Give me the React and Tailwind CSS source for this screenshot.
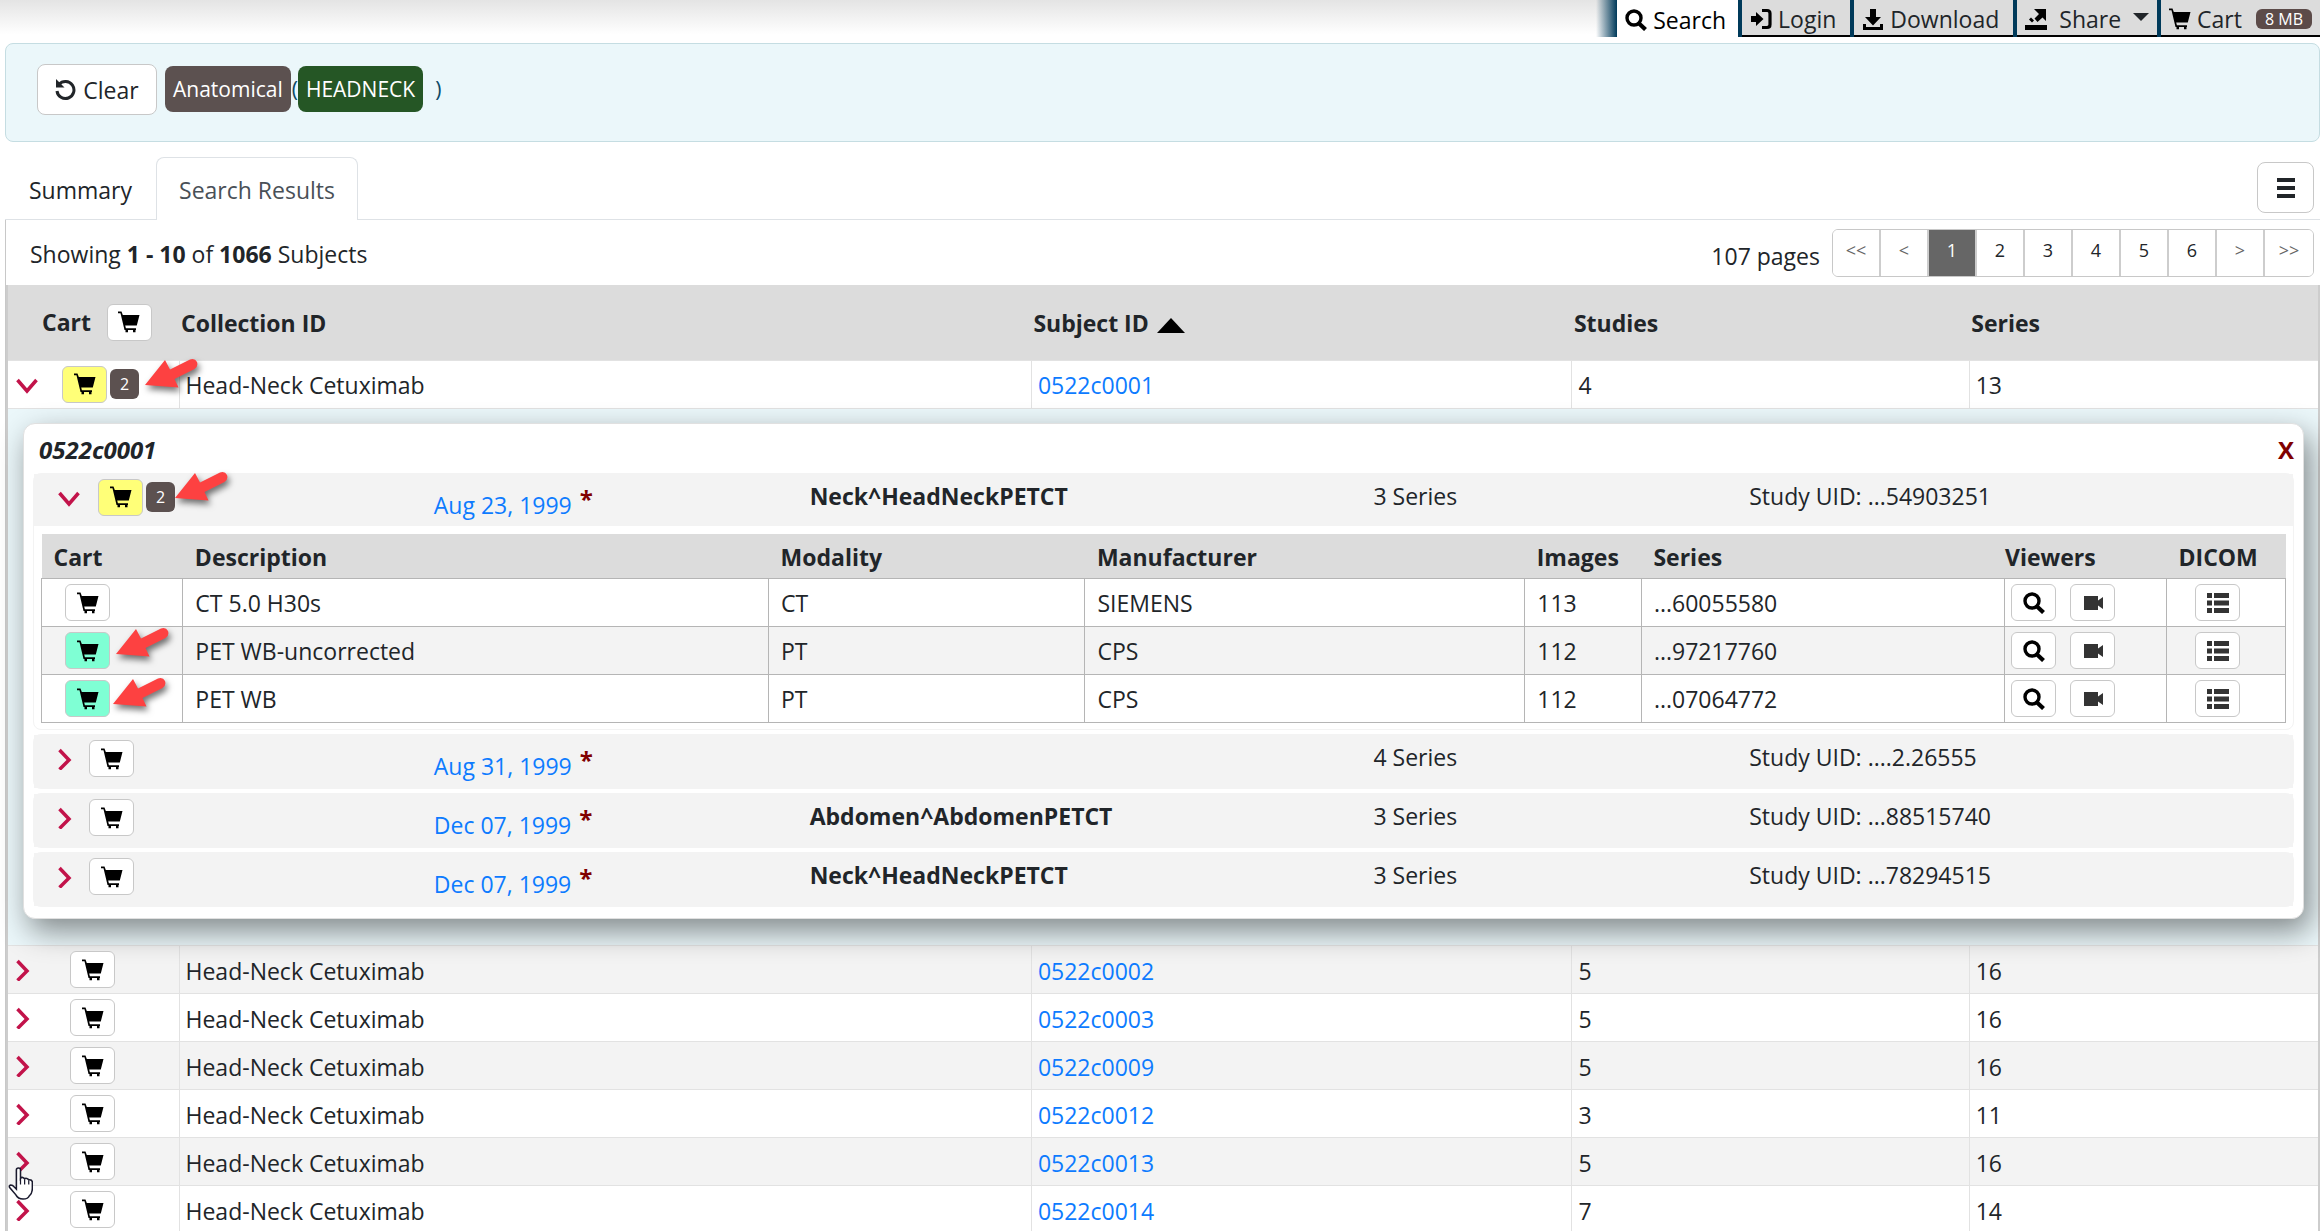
import React, { useState } from "react";
import clsx from "clsx";

const tools = [
  { label: "Search", icon: "search" },
  { label: "Login", icon: "login" },
  { label: "Download", icon: "download" },
  { label: "Share", icon: "share", caret: true },
  { label: "Cart", icon: "cart", badge: "8 MB" },
];

const pages = ["<<", "<", "1", "2", "3", "4", "5", "6", ">", ">>"];

const subjects = [
  { id: "0522c0001", studies: 4, series: 13, inCart: 2 },
  { id: "0522c0002", studies: 5, series: 16 },
  { id: "0522c0003", studies: 5, series: 16 },
  { id: "0522c0009", studies: 5, series: 16 },
  { id: "0522c0012", studies: 3, series: 11 },
  { id: "0522c0013", studies: 5, series: 16 },
  { id: "0522c0014", studies: 7, series: 14 },
];

const seriesRows = [
  { description: "CT 5.0 H30s", modality: "CT", manufacturer: "SIEMENS", images: 113, uid: "...60055580" },
  { description: "PET WB-uncorrected", modality: "PT", manufacturer: "CPS", images: 112, uid: "...97217760", inCart: true, arrow: "top-0 left-[73px]" },
  { description: "PET WB", modality: "PT", manufacturer: "CPS", images: 112, uid: "...07064772", inCart: true, arrow: "top-0.5 left-[70px]" },
];

const studies = [
  { date: "Aug 23, 1999", description: "Neck^HeadNeckPETCT", count: 3, uid: "...54903251", inCart: 2, rows: seriesRows },
  { date: "Aug 31, 1999", description: "", count: 4, uid: "....2.26555" },
  { date: "Dec 07, 1999", description: "Abdomen^AbdomenPETCT", count: 3, uid: "...88515740" },
  { date: "Dec 07, 1999", description: "Neck^HeadNeckPETCT", count: 3, uid: "...78294515" },
];

const icons = {
  search: (
    <g fill="none" stroke="currentColor">
      <circle cx="9" cy="9" r="7" strokeWidth="3.4" />
      <path d="M13.5 14l7 6.500" strokeWidth="4.2" />
    </g>
  ),
  login: (
    <g>
      <path d="M1 8h5V4l7.500 7L6 18v-4H1z" fill="currentColor" />
      <path d="M12 2.500h5q3 0 3 3v11q0 3-3 3h-5" fill="none" stroke="currentColor" strokeWidth="3.200" />
    </g>
  ),
  download: (
    <g fill="currentColor">
      <path d="M8 1h6v8h5l-8 8.500L3 9h5z" />
      <path d="M1 16h3v3h14v-3h3v6H1z" />
    </g>
  ),
  share: (
    <g fill="currentColor">
      <path d="M9 1h12v12l-3.500-3.500-5 4.500-3-3.500 4.500-4.500z" />
      <path d="M6 9.500l3 3-2 2-3-3z" />
      <path d="M0 17h22v5H0z" />
    </g>
  ),
  cart: (
    <g fill="currentColor">
      <path d="M0 .5h3.500L4.800 4h16.700l-2.700 10.500H7.200l.7 2.800H18V19H6.500L2.500 2.300H0z" />
      <path d="M7.500 19h2.500v2.200H7.500zM15 19h2.500v2.200H15z" />
    </g>
  ),
  video: <path d="M2 4h14v4.500L21 5v12l-5-3.500V18H2z" fill="#333" />,
  list: <path d="M0 1h5v5H0zM7 1h15v5H7zM0 8.500h5v5H0zM7 8.500h15v5H7zM0 16h5v5H0zM7 16h15v5H7z" fill="#333" />,
  undo: (
    <g>
      <path d="M4 5.500a8.500 8.500 0 1 1-2 6.500" fill="none" stroke="currentColor" strokeWidth="3" />
      <path d="M1 0v8.500h8.500z" fill="currentColor" />
    </g>
  ),
  menu: <path d="M2 1h18v4H2zM2 9h18v4H2zM2 17h18v4H2z" fill="currentColor" />,
};

const Icon = ({ name, className }) => (
  <svg viewBox="0 0 22 22" className={clsx("shrink-0", className || "size-[22px]")} aria-hidden="true">
    {icons[name]}
  </svg>
);

const Chevron = ({ open, onClick, label }) => (
  <button type="button" onClick={onClick} aria-label={label} className="flex w-[22px] shrink-0 text-[#c2134a]">
    <svg viewBox="0 0 22 22" className="size-[22px]" aria-hidden="true">
      <path
        d={open ? "M1.500 7L11 18l9.500-11" : "M1.500 2L11 12l-9.500 9.500"}
        fill="none"
        stroke="currentColor"
        strokeWidth="3.500"
      />
    </svg>
  </button>
);

const IconButton = ({ name, label, color = "bg-white" }) => (
  <button
    type="button"
    aria-label={label}
    className={clsx("flex h-[37px] w-[45px] shrink-0 items-center justify-center rounded-md border border-[#c8c8c8] text-black", color)}
  >
    <Icon name={name} />
  </button>
);

const CountBadge = ({ children }) => (
  <span className="flex h-[30px] w-[29px] items-center justify-center rounded-md bg-[#5c5150] text-base text-white">
    {children}
  </span>
);

// Red callout arrow, its tip sits on the left edge
const Arrow = ({ className }) => (
  <svg viewBox="0 0 60 40" className={clsx("absolute z-10 h-[40px] w-[60px] drop-shadow-[2px_4px_3px_rgba(0,0,0,0.55)]", className)} aria-hidden="true">
    <path d="M1 27L21 2l5 9.500L46 1.500q5-1.500 7 2.500 1.500 4.500-2.500 7L30.500 21l4 8.500z" fill="#fd4141" />
  </svg>
);

const SeriesTable = ({ rows }) => {
  const head = "px-3 pt-0.5 text-left font-bold";
  const cell = "border border-[#b5b5b5] px-3";
  return (
    <div className="px-[7px] pt-2 pb-1.5">
      <table className="w-full table-fixed border-collapse">
        <thead>
          <tr className="h-[45px] bg-[#dcdcdc]">
            <th className={clsx(head, "w-[6.3%]")}>Cart</th>
            <th className={clsx(head, "w-[26.1%]")}>Description</th>
            <th className={clsx(head, "w-[14.1%]")}>Modality</th>
            <th className={clsx(head, "w-[19.6%]")}>Manufacturer</th>
            <th className={clsx(head, "w-[5.2%]")}>Images</th>
            <th className={clsx(head, "w-[16.2%]")}>Series</th>
            <th className="w-[7.2%] pt-0.5 text-left font-bold">Viewers</th>
            <th className={head}>DICOM</th>
          </tr>
        </thead>
        <tbody>
          {rows.map((row) => (
            <tr key={row.uid} className="h-12 even:bg-[#f3f3f3]">
              <td className="relative border border-[#b5b5b5] px-[23px]">
                <IconButton name="cart" label={`Add ${row.description} to cart`} color={row.inCart ? "bg-[#7fffd4]" : "bg-white"} />
                {row.inCart && <Arrow className={row.arrow} />}
              </td>
              <td className={cell}>{row.description}</td>
              <td className={cell}>{row.modality}</td>
              <td className={cell}>{row.manufacturer}</td>
              <td className={cell}>{row.images}</td>
              <td className={cell}>{row.uid}</td>
              <td className="border border-[#b5b5b5] px-1.5">
                <div className="flex gap-[14px]">
                  <IconButton name="search" label="View images" />
                  <IconButton name="video" label="Play images" />
                </div>
              </td>
              <td className="border border-[#b5b5b5] px-7">
                <IconButton name="list" label="DICOM data" />
              </td>
            </tr>
          ))}
        </tbody>
      </table>
    </div>
  );
};

const Study = ({ study }) => {
  const [open, setOpen] = useState(Boolean(study.rows));
  const column = "pt-1.5 pl-[22px]";
  return (
    <div className="rounded-lg border border-[#f3f3f3]">
      <div className={clsx("grid grid-cols-12 bg-[#f3f3f3] px-0.5", study.rows ? "h-[52px]" : "h-[53px]")}>
        <div className="col-span-2 flex items-start pt-[5px] pl-[22px]">
          <div className="flex h-[37px] items-center">
            <Chevron open={open} onClick={() => setOpen(!open)} label={`Toggle study ${study.date}`} />
            <div className={clsx("relative flex items-center gap-[3px]", study.inCart ? "ml-[18px]" : "ml-[9px]")}>
              <IconButton name="cart" label="Add study to cart" color={study.inCart ? "bg-[#ffff78]" : "bg-white"} />
              {study.inCart && <CountBadge>{study.inCart}</CountBadge>}
              {study.inCart && <Arrow className="-top-2 left-[76px]" />}
            </div>
          </div>
        </div>
        <div className="col-span-2 flex items-start gap-2 pt-[15px] pl-[22px]">
          <a href="#study" className="text-[#0d7bff]">{study.date}</a>
          <span className="-mt-1.5 text-2xl font-bold text-[#800000]">*</span>
        </div>
        <div className={clsx("col-span-3 font-bold", column)}>{study.description}</div>
        <div className={clsx("col-span-2", column)}>{study.count} Series</div>
        <div className={clsx("col-span-3", column)}>Study UID: {study.uid}</div>
      </div>
      {open && study.rows && <SeriesTable rows={study.rows} />}
    </div>
  );
};

const SubjectDetails = ({ subject, onClose }) => (
  <div className="bg-[#ebf7fa] pt-[14px] pr-3.5 pb-[26px] pl-[15px]">
    <div className="relative rounded-xl border border-[#e0e0e0] bg-white px-[9px] pb-[11px] shadow-[6px_12px_30px_rgba(0,0,0,0.45)]">
      <div className="flex h-[49px] items-center justify-between pt-1 pl-1.5 text-2xl font-bold">
        <h2 className="italic">{subject.id}</h2>
        <button type="button" onClick={onClose} aria-label="Close" className="text-[#800000]">X</button>
      </div>
      <div className="flex flex-col gap-1">
        {studies.map((study) => (
          <Study key={study.uid} study={study} />
        ))}
      </div>
    </div>
  </div>
);

const HandCursor = () => (
  <svg viewBox="0 0 24 32" className="absolute top-[29px] left-0 z-10 h-[33px] w-[25px]" aria-hidden="true">
    <path
      d="M8 19V3q0-2 2-2t2 2v8q1-1.500 3-.5l1 1q1-1 3 0l1 1q3-.5 3.500 2v6q0 5-3 7.500-1 3-6 3t-7-4L1.500 20q-1-2 1-2.500 2 0 3.500 2l2 2z"
      fill="#fff"
      stroke="#1a1a2e"
      strokeWidth="1.500"
    />
    <path d="M12 11v6M16 12v5M20 13v4" stroke="#1a1a2e" strokeWidth="1.200" />
  </svg>
);

const SubjectRow = ({ subject, index, open, onToggle }) => {
  const cell = "border-y border-l border-[#e2e2e2] px-1.5 pt-0.5";
  return (
    <>
      <tr className={clsx("h-12", index % 2 ? "bg-[#f3f3f3]" : "bg-white")}>
        <td className="relative border-y border-[#e2e2e2] pl-2">
          <div className="flex items-center">
            <Chevron open={open} onClick={() => onToggle(index)} label={`Toggle subject ${subject.id}`} />
            <div className={clsx("relative flex items-center gap-[3px]", subject.inCart ? "ml-6" : "ml-8")}>
              <IconButton name="cart" label="Add subject to cart" color={subject.inCart ? "bg-[#ffff78]" : "bg-white"} />
              {subject.inCart && <CountBadge>{subject.inCart}</CountBadge>}
              {subject.inCart && <Arrow className="-top-2 left-[82px]" />}
            </div>
          </div>
          {subject.id === "0522c0013" && <HandCursor />}
        </td>
        <td className={cell}>Head-Neck Cetuximab</td>
        <td className={cell}>
          <a href="#subject" className="text-[#0d7bff]">{subject.id}</a>
        </td>
        <td className={cell}>{subject.studies}</td>
        <td className={cell}>{subject.series}</td>
      </tr>
      {open && (
        <tr>
          <td colSpan={5} className="p-0">
            <SubjectDetails subject={subject} onClose={() => onToggle(index)} />
          </td>
        </tr>
      )}
    </>
  );
};

const App = () => {
  const [openRow, setOpenRow] = useState(0);
  const toggleRow = (index) => setOpenRow(openRow === index ? -1 : index);

  return (
    <div className="h-screen overflow-hidden bg-white font-['Open_Sans','Noto_Sans',sans-serif] text-[23px] leading-8 text-[#212529]">
      {/* Top menu */}
      <header className="flex h-[43px] items-start justify-end bg-linear-to-b from-[#e4e4e4] to-white to-80%">
        <div className="h-[37px] w-[21px] bg-linear-to-r from-transparent to-[#003a5a]" />
        <nav className="flex h-[37px] gap-1 bg-[#003a5a]">
          {tools.map((tool, i) => (
            <a
              key={tool.label}
              href={`#${tool.label}`}
              className={clsx(
                "flex items-center gap-1.5 pt-0.5 pl-2 whitespace-nowrap",
                i === 0 ? "bg-white pr-3 text-black" : "border-b-2 border-black bg-[#dcdcdc]",
                i > 0 && (tool.caret || tool.badge ? "pr-2" : "pr-3.5")
              )}
            >
              <Icon name={tool.icon} className="size-[22px] text-black" />
              <span className={clsx(tool.caret && "ml-1.5")}>{tool.label}</span>
              {tool.caret && <span className="mb-1 ml-1.5 border-x-8 border-t-8 border-x-transparent border-t-[#212529]" />}
              {tool.badge && (
                <span className="ml-2 rounded-md bg-[#5c4b49] px-[9px] text-base leading-5 text-white">{tool.badge}</span>
              )}
            </a>
          ))}
        </nav>
      </header>

      {/* Current query */}
      <section className="ml-[5px] flex h-[99px] items-start rounded-lg border border-[#c5dde2] bg-[#ebf7fa] pt-5 pl-[31px]">
        <button type="button" className="mr-2 flex h-[51px] w-[120px] items-center justify-center gap-1.5 rounded-lg border border-[#c8c8c8] bg-white">
          <Icon name="undo" />
          Clear
        </button>
        <div className="flex h-[50px] items-center text-[21px] text-[#0b4a66]">
          <span className="rounded-lg bg-[#5c5150] px-2 py-[7px] text-white">Anatomical</span>
          <span className="pl-px">(</span>
          <span className="rounded-lg bg-[#255625] px-2 py-[7px] text-white">HEADNECK</span>
          <span className="pl-3">)</span>
        </div>
      </section>

      {/* Tabs */}
      <div className="ml-[5px] flex h-[78px] items-end justify-between border-b border-[#dee2e6]">
        <div className="-mb-px flex">
          <a href="#summary" className="flex h-[63px] w-[151px] items-center justify-center pt-0.5">Summary</a>
          <a href="#results" className="flex h-[63px] w-[202px] items-center justify-center rounded-t-lg border border-b-0 border-[#dee2e6] bg-white pt-0.5 text-[#495057]">
            Search Results
          </a>
        </div>
        <button type="button" aria-label="Columns" className="mr-[6px] mb-1.5 flex h-[51px] w-[57px] items-center justify-center rounded-lg border border-[#c8c8c8]">
          <Icon name="menu" />
        </button>
      </div>

      <main className="ml-[5px] border-l border-[#c8c8c8]">
        <div className="flex h-[65px] items-center justify-between pr-[6px] pl-6">
          <p className="pt-0.5">
            Showing <b>1 - 10</b> of <b>1066</b> Subjects
          </p>
          <div className="flex items-center gap-3">
            <span className="pt-1.5">107 pages</span>
            <div className="flex h-12 divide-x-2 divide-[#cdcdcd] overflow-hidden rounded-md border border-[#c8c8c8] text-lg leading-6">
              {pages.map((page) => (
                <button
                  key={page}
                  type="button"
                  className={clsx(
                    "w-12 pb-1.5",
                    page === "1" ? "bg-[#666] text-white" : "bg-white",
                    /[<>]/.test(page) && "text-[#666]"
                  )}
                >
                  {page}
                </button>
              ))}
            </div>
          </div>
        </div>

        {/* Subjects */}
        <div className="border-x-2 border-[#cdcdcd]">
          <table className="w-full table-fixed border-collapse">
            <thead>
              <tr className="h-[75px] bg-[#dcdcdc]">
                <th className="w-[171px] pl-[34px]">
                  <div className="flex items-center gap-4">
                    Cart
                    <IconButton name="cart" label="Add all to cart" />
                  </div>
                </th>
                <th className="w-[36.9%] px-0.5 pt-0.5 text-left">Collection ID</th>
                <th className="w-[23.4%] px-0.5 pt-0.5 text-left">
                  <div className="flex items-center gap-2">
                    Subject ID
                    <span className="mt-1 border-x-[14px] border-b-[15px] border-x-transparent border-b-black" />
                  </div>
                </th>
                <th className="w-[17.2%] px-0.5 pt-0.5 text-left">Studies</th>
                <th className="px-0.5 pt-0.5 text-left">Series</th>
              </tr>
            </thead>
            <tbody>
              {subjects.map((subject, index) => (
                <SubjectRow key={subject.id} subject={subject} index={index} open={openRow === index} onToggle={toggleRow} />
              ))}
            </tbody>
          </table>
        </div>
      </main>
    </div>
  );
};

export default App;
